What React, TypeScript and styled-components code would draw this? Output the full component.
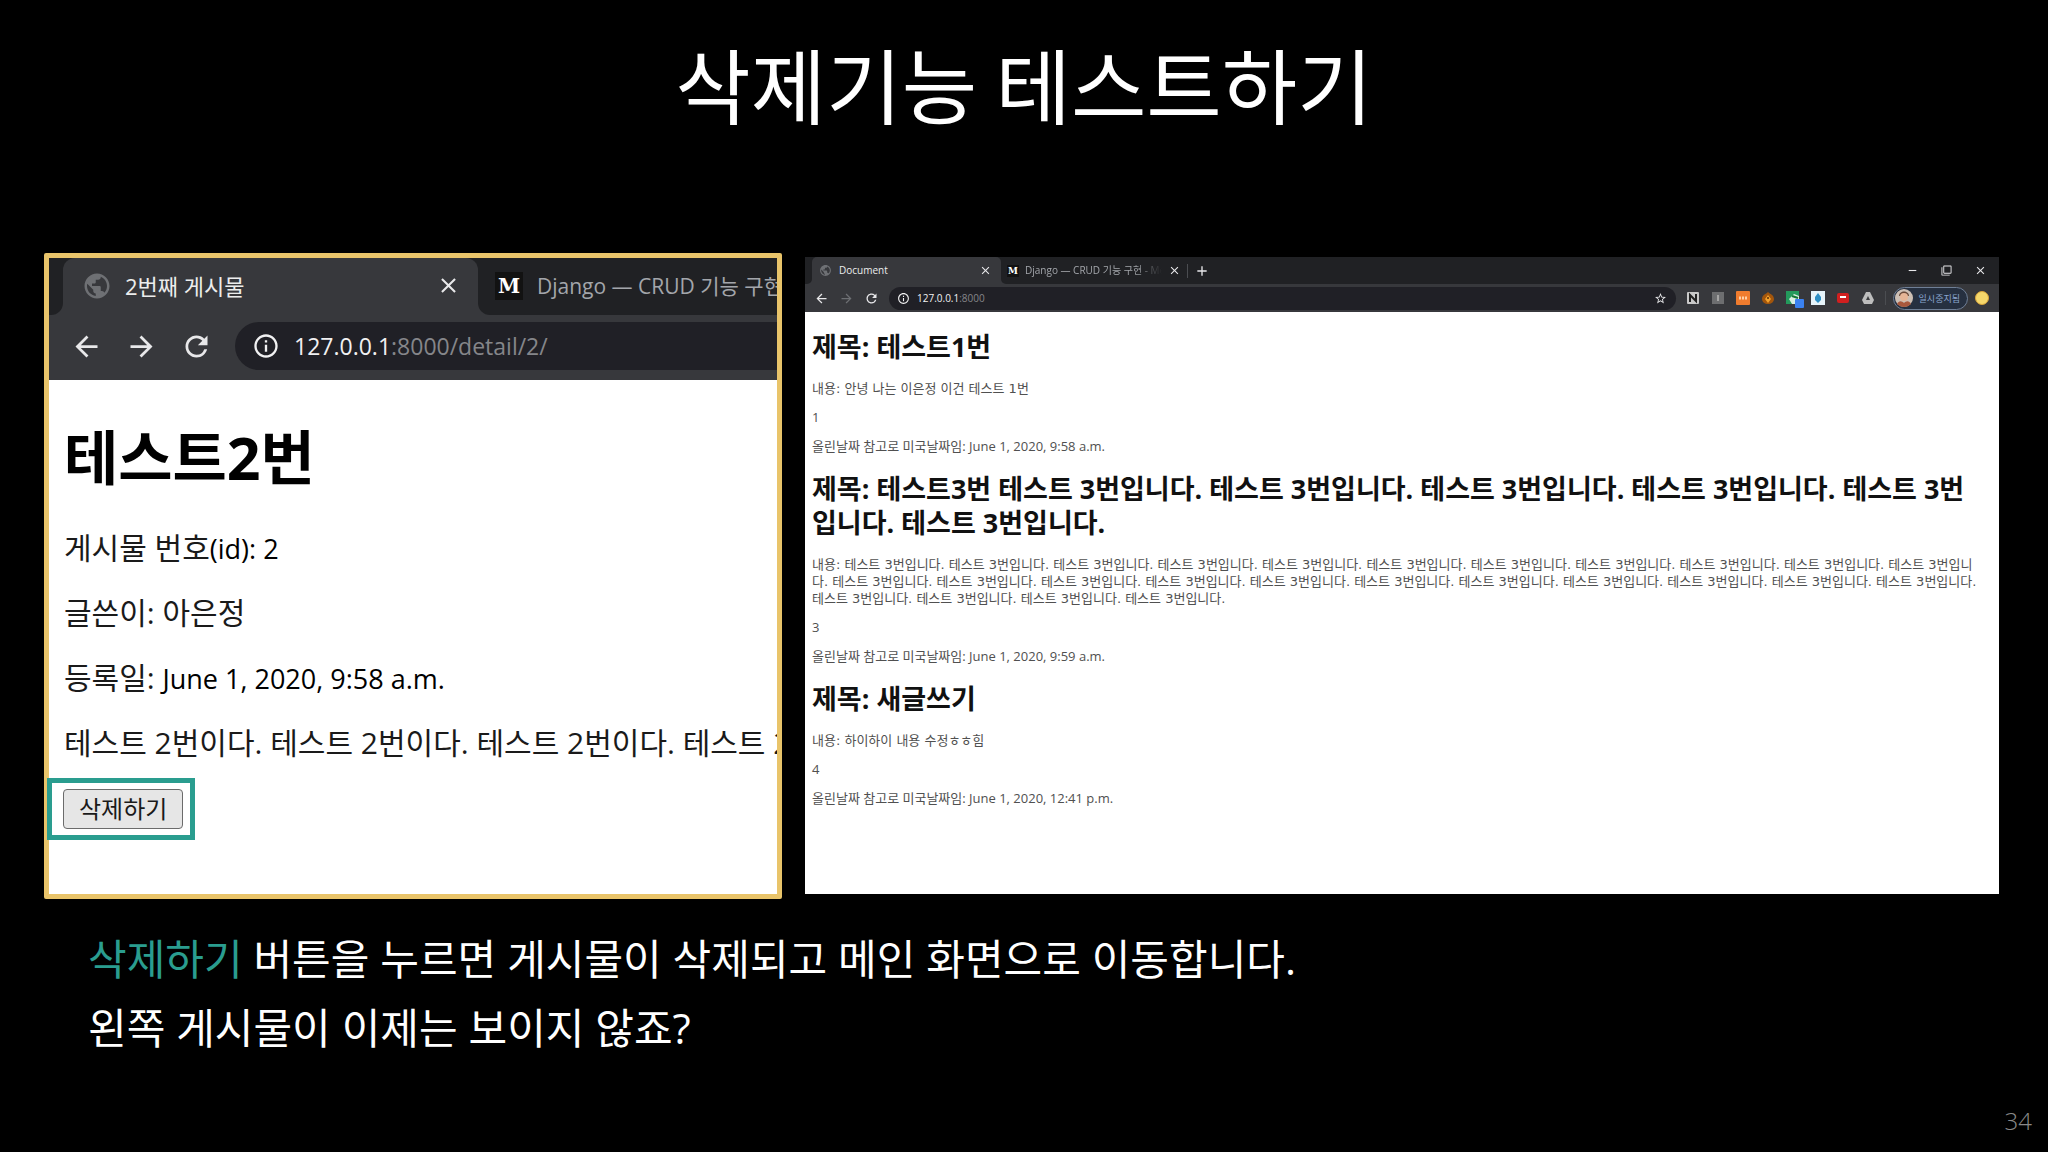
import React from "react";
import styled, { createGlobalStyle } from "styled-components";
import {
  MdAdd,
  MdArrowBack,
  MdArrowForward,
  MdClose,
  MdFilterNone,
  MdInfoOutline,
  MdPublic,
  MdRefresh,
  MdRemove,
  MdStarBorder,
} from "react-icons/md";

const sans = `"Open Sans", "Noto Sans CJK KR", sans-serif`;
const dark = "#202124";
const bar = "#37383c";
const teal = "#2a9d8f";

const GlobalStyle = createGlobalStyle`
  * { box-sizing: border-box; }
  body { margin: 0; background: #000; font-family: ${sans}; }
  h1, h2, p { margin: 0; }
  button { font-family: inherit; }
`;

const Slide = styled.main`
  min-height: 100vh;
  display: flex;
  flex-direction: column;
  background: #000;
  color: #fff;
`;

const SlideTitle = styled.h1`
  padding: 23px 24px 110px;
  font-size: 82px;
  line-height: 120px;
  font-weight: 400;
  text-align: center;
  font-family: "Noto Sans CJK KR", sans-serif;
`;

const Shots = styled.div`
  display: grid;
  grid-template-columns: 738fr 1194fr;
  gap: 23px;
  padding: 0 49px 0 44px;
`;

const DetailShot = styled.section`
  min-width: 0;
  border: 5px solid #e9c46a;
  border-radius: 2px;
  background: #fff;
  color: #000;
`;

const ListShot = styled.section`
  min-width: 0;
  margin: 4px 0 5px;
  background: #fff;
  color: #000;
`;

const TabStrip = styled.div<{ $h: number }>`
  height: ${(p) => p.$h}px;
  display: flex;
  background: ${bar};
  overflow: hidden;
`;

const StripStart = styled.div<{ $w: number; $r: number }>`
  flex: none;
  width: ${(p) => p.$w}px;
  background: ${dark};
  border-bottom-right-radius: ${(p) => p.$r}px;
`;

const StripRest = styled.div<{ $r: number; $gap: number; $pad: string }>`
  flex: 1;
  min-width: 0;
  display: flex;
  align-items: center;
  gap: ${(p) => p.$gap}px;
  padding: ${(p) => p.$pad};
  background: ${dark};
  border-bottom-left-radius: ${(p) => p.$r}px;
  color: #a9acb1;
  white-space: nowrap;
`;

const TabBack = styled.div<{ $w: number }>`
  flex: none;
  width: ${(p) => p.$w}px;
  display: flex;
  background: linear-gradient(${dark} 50%, ${bar} 50%);
`;

const ActiveTab = styled.div<{ $r: number; $gap: number; $pad: string }>`
  flex: 1;
  display: flex;
  align-items: center;
  gap: ${(p) => p.$gap}px;
  padding: ${(p) => p.$pad};
  background: ${bar};
  border-radius: ${(p) => p.$r}px ${(p) => p.$r}px 0 0;
  color: #6e7074;
`;

const TabTitle = styled.span<{ $size: number; $active?: boolean }>`
  flex: ${(p) => (p.$active ? "1" : "none")};
  padding-bottom: 2px;
  font-size: ${(p) => p.$size}px;
  color: ${(p) => (p.$active ? "#eceded" : "#a3a6ab")};
  white-space: nowrap;
`;

const FadedTitle = styled(TabTitle)`
  width: 137px;
  overflow: hidden;
  mask-image: linear-gradient(90deg, #000 80%, transparent);
`;

const MediumLogo = styled.span<{ $box: number; $size: number }>`
  flex: none;
  width: ${(p) => p.$box}px;
  height: ${(p) => p.$box}px;
  display: grid;
  place-items: center;
  background: #121212;
  color: #fff;
  font: 700 ${(p) => p.$size}px "DejaVu Serif", serif;
`;

const IconButton = styled.button<{ $size: number; $dim?: boolean }>`
  flex: none;
  display: grid;
  place-items: center;
  padding: 0;
  border: 0;
  background: none;
  color: ${(p) => (p.$dim ? "#6d6f73" : "#e8e8ea")};

  svg {
    display: block;
    width: ${(p) => p.$size}px;
    height: ${(p) => p.$size}px;
  }
`;

const Toolbar = styled.div<{ $h: number; $gap: number; $pad: string }>`
  height: ${(p) => p.$h}px;
  display: flex;
  align-items: center;
  gap: ${(p) => p.$gap}px;
  padding: ${(p) => p.$pad};
  background: ${bar};
`;

const Address = styled.div<{ $size: number; $h: number; $gap: number; $pad: string; $open?: boolean }>`
  flex: 1;
  min-width: 0;
  height: ${(p) => p.$h}px;
  display: flex;
  align-items: center;
  gap: ${(p) => p.$gap}px;
  padding: ${(p) => p.$pad};
  background: #202026;
  border-radius: ${(p) => (p.$open ? "24px 0 0 24px" : "12px")};
  font-size: ${(p) => p.$size}px;
  color: #f1f1f2;
`;

const Url = styled.span`
  flex: 1;
  white-space: nowrap;
`;

const UrlRest = styled.span`
  color: #85868a;
`;

const DetailPage = styled.div`
  padding: 42px 0 54px 15px;
`;

const DetailTitle = styled.h1`
  font-size: 59px;
  line-height: 70px;
  font-weight: 700;
`;

const DetailText = styled.div`
  display: flex;
  flex-direction: column;
  gap: 25px;
  padding: 36px 0 15px;
  font-size: 30px;
  line-height: 40px;
  color: #1a1a1a;
`;

const Latin = styled.span`
  font-size: 27px;
  line-height: 1;
  color: #000;
`;

const Body = styled.p`
  white-space: nowrap;
  overflow: hidden;
`;

const Highlight = styled.div`
  width: max-content;
  margin-left: -17px;
  padding: 6px 7px 6px 11px;
  border: 5px solid ${teal};
`;

const DeleteButton = styled.button`
  display: block;
  padding: 0 15px;
  border: 1px solid #6b6b6b;
  border-radius: 4px;
  background: #e6e6e6;
  color: #1a1a1a;
  font-size: 24px;
  line-height: 38px;
`;

const WindowControls = styled.div`
  display: flex;
  align-items: center;
  gap: 22px;
  margin-left: auto;
`;

const Divider = styled.span`
  width: 1px;
  height: 14px;
  background: #4b4d51;
`;

const Extensions = styled.div`
  display: flex;
  align-items: center;
  gap: 11px;

  svg {
    display: block;
    width: 14px;
    height: 14px;
  }
`;

const Account = styled.div`
  display: flex;
  align-items: center;
  gap: 7px;
`;

const Profile = styled.button`
  height: 23px;
  display: flex;
  align-items: center;
  gap: 6px;
  padding: 0 7px 0 1px;
  border: 1px solid #6f7f96;
  border-radius: 12px;
  background: #263040;
  color: #8ba6cf;
  font-size: 9px;

  svg {
    width: 18px;
    height: 18px;
  }
`;

const Coin = styled.span`
  width: 14px;
  height: 14px;
  border-radius: 50%;
  background: #f5d76b;
  border: 1px solid #d9a53a;
`;

const ListPage = styled.div`
  padding: 18px 15px 18px 7px;
`;

const Post = styled.article`
  display: flex;
  flex-direction: column;
  gap: 12px;
  padding-bottom: 17px;
`;

const PostTitle = styled.h2`
  padding-bottom: 4px;
  font-size: 27px;
  line-height: 34px;
  font-weight: 700;
  color: #111;
`;

const PostText = styled.p`
  font-size: 13px;
  line-height: 17px;
  color: #505050;
`;

const PostBody = styled(PostText)`
  font-family: "DejaVu Sans", "Noto Sans CJK KR", sans-serif;
`;

const Caption = styled.div`
  padding: 25px 90px 0 88px;
  font-size: 42px;
  line-height: 69px;
`;

const Accent = styled.span`
  color: ${teal};
`;

const PageNumber = styled.footer`
  margin-top: auto;
  padding: 0 16px 14px;
  font-size: 24px;
  line-height: 34px;
  font-weight: 300;
  color: #8a8a8a;
  text-align: right;
`;

const ExtensionIcons = () => (
  <Extensions>
    <svg viewBox="0 0 14 14">
      <rect x="1" y="1" width="12" height="12" rx="1" fill="#c9c9c9" />
      <path d="M4 11V4l6 6V3" fill="none" stroke="#222" strokeWidth="2" />
    </svg>
    <svg viewBox="0 0 14 14">
      <rect x="1" y="1" width="12" height="12" fill="#6d6e70" />
      <path d="M7 4v6" stroke="#a5a5a5" strokeWidth="2" />
    </svg>
    <svg viewBox="0 0 14 14">
      <rect width="14" height="14" rx="1" fill="#f07c2e" />
      <path d="M3 7h8" stroke="#ffd0a8" strokeWidth="3" strokeDasharray="2 1" />
    </svg>
    <svg viewBox="0 0 14 14">
      <path d="M7 1c2 2 6 3 6 7 0 3-3 5-6 5S1 11 1 8c0-4 4-5 6-7z" fill="#a3560c" />
      <path d="M7 4l3 4-3 4-3-4z" fill="#f3a22c" />
      <circle cx="7" cy="7" r="1" fill="#5a2d05" />
    </svg>
    <svg viewBox="0 0 14 14" overflow="visible">
      <rect width="13" height="13" fill="#d9efe2" />
      <path d="M0 0h13v5L8 3 3 8l3 5H0z" fill="#239a5c" />
      <path d="M6 5l6 2" stroke="#173" strokeWidth="2" />
      <rect x="9" y="8" width="9" height="9" rx="1" fill="#3b82f0" />
    </svg>
    <svg viewBox="0 0 14 14">
      <rect width="14" height="14" fill="#e6f4fa" />
      <path d="M7 2l3 4v3l-3 3-3-3V6z" fill="#2d8fc4" />
    </svg>
    <svg viewBox="0 0 14 14">
      <rect x="1" y="2" width="12" height="10" rx="2" fill="#d01f1f" />
      <path d="M4 6h6" stroke="#fff" strokeWidth="2" />
    </svg>
    <svg viewBox="0 0 14 14">
      <path d="M5 1h4l4 8-2 4H3L1 9z" fill="#bdbdbd" />
      <path d="M7 5l2 4H5z" fill="#3b3c3f" />
    </svg>
  </Extensions>
);

const Avatar = () => (
  <svg viewBox="0 0 18 18">
    <circle cx="9" cy="9" r="9" fill="#cdbfb4" />
    <path d="M4 7c0-6 10-6 10 0z" fill="#6b4a3a" />
    <circle cx="9" cy="8" r="4" fill="#e6b596" />
    <path d="M2 15c2-4 5-3 7-1 2-2 5-3 7 1-4 4-10 4-14 0z" fill="#a8583d" />
  </svg>
);

const times = (text: string, n: number) => Array(n).fill(text).join(" ");

const posts = [
  { id: 1, title: "테스트1번", body: "안녕 나는 이은정 이건 테스트 1번", date: "June 1, 2020, 9:58 a.m." },
  {
    id: 3,
    title: "테스트3번 " + times("테스트 3번입니다.", 6),
    body: times("테스트 3번입니다.", 26),
    date: "June 1, 2020, 9:59 a.m.",
  },
  { id: 4, title: "새글쓰기", body: "하이하이 내용 수정ㅎㅎ힘", date: "June 1, 2020, 12:41 p.m." },
];

const DetailBrowser = () => (
  <DetailShot>
    <TabStrip $h={57}>
      <StripStart $w={14} $r={12} />
      <TabBack $w={415}>
        <ActiveTab $r={12} $gap={13} $pad="0 17px 2px 19px">
          <MdPublic size={30} />
          <TabTitle $size={22} $active>2번째 게시물</TabTitle>
          <IconButton $size={25} aria-label="탭 닫기"><MdClose /></IconButton>
        </ActiveTab>
      </TabBack>
      <StripRest $r={12} $gap={14} $pad="0 0 2px 17px">
        <MediumLogo $box={28} $size={20}>M</MediumLogo>
        <TabTitle $size={21}>Django — CRUD 기능 구현</TabTitle>
      </StripRest>
    </TabStrip>
    <Toolbar $h={65} $gap={22} $pad="0 0 3px 21px">
      <IconButton $size={33} aria-label="뒤로"><MdArrowBack /></IconButton>
      <IconButton $size={33} aria-label="앞으로"><MdArrowForward /></IconButton>
      <IconButton $size={33} aria-label="새로고침"><MdRefresh /></IconButton>
      <Address $size={23} $h={48} $gap={14} $pad="0 0 0 17px" $open>
        <MdInfoOutline size={28} />
        <Url>127.0.0.1<UrlRest>:8000/detail/2/</UrlRest></Url>
      </Address>
    </Toolbar>
    <DetailPage>
      <DetailTitle>테스트2번</DetailTitle>
      <DetailText>
        <p>게시물 번호<Latin>(id): 2</Latin></p>
        <p>글쓴이: 아은정</p>
        <p>등록일: <Latin>June 1, 2020, 9:58 a.m.</Latin></p>
        <Body>{times("테스트 2번이다.", 5)}</Body>
      </DetailText>
      <Highlight>
        <DeleteButton type="button">삭제하기</DeleteButton>
      </Highlight>
    </DetailPage>
  </DetailShot>
);

const ListBrowser = () => (
  <ListShot>
    <TabStrip $h={27}>
      <StripStart $w={7} $r={5} />
      <TabBack $w={189}>
        <ActiveTab $r={5} $gap={7} $pad="0 9px 0 7px">
          <MdPublic size={13} />
          <TabTitle $size={10} $active>Document</TabTitle>
          <IconButton $size={13} aria-label="탭 닫기"><MdClose /></IconButton>
        </ActiveTab>
      </TabBack>
      <StripRest $r={5} $gap={6} $pad="0 12px 0 6px">
        <MediumLogo $box={12} $size={9}>M</MediumLogo>
        <FadedTitle $size={10}>Django — CRUD 기능 구현 - Medium</FadedTitle>
        <IconButton $size={13} aria-label="탭 닫기"><MdClose /></IconButton>
        <Divider />
        <IconButton $size={16} aria-label="새 탭"><MdAdd /></IconButton>
        <WindowControls>
          <IconButton $size={13} aria-label="최소화"><MdRemove /></IconButton>
          <IconButton $size={11} aria-label="이전 크기로"><MdFilterNone /></IconButton>
          <IconButton $size={13} aria-label="닫기"><MdClose /></IconButton>
        </WindowControls>
      </StripRest>
    </TabStrip>
    <Toolbar $h={28} $gap={10} $pad="0 10px 0 9px">
      <IconButton $size={15} aria-label="뒤로"><MdArrowBack /></IconButton>
      <IconButton $size={15} $dim aria-label="앞으로"><MdArrowForward /></IconButton>
      <IconButton $size={15} aria-label="새로고침"><MdRefresh /></IconButton>
      <Address $size={10} $h={23} $gap={7} $pad="0 9px 0 8px">
        <MdInfoOutline size={13} />
        <Url>127.0.0.1<UrlRest>:8000</UrlRest></Url>
        <IconButton $size={13} aria-label="북마크"><MdStarBorder /></IconButton>
      </Address>
      <ExtensionIcons />
      <Account>
        <Divider />
        <Profile type="button"><Avatar />일시중지됨</Profile>
        <Coin />
      </Account>
    </Toolbar>
    <ListPage>
      {posts.map((post) => (
        <Post key={post.id}>
          <PostTitle>제목: {post.title}</PostTitle>
          <PostBody>내용: {post.body}</PostBody>
          <PostText>{post.id}</PostText>
          <PostText>올린날짜 참고로 미국날짜임: {post.date}</PostText>
        </Post>
      ))}
    </ListPage>
  </ListShot>
);

export default function App() {
  return (
    <Slide>
      <GlobalStyle />
      <SlideTitle>삭제기능 테스트하기</SlideTitle>
      <Shots>
        <DetailBrowser />
        <ListBrowser />
      </Shots>
      <Caption>
        <p><Accent>삭제하기</Accent> 버튼을 누르면 게시물이 삭제되고 메인 화면으로 이동합니다.</p>
        <p>왼쪽 게시물이 이제는 보이지 않죠?</p>
      </Caption>
      <PageNumber>34</PageNumber>
    </Slide>
  );
}
